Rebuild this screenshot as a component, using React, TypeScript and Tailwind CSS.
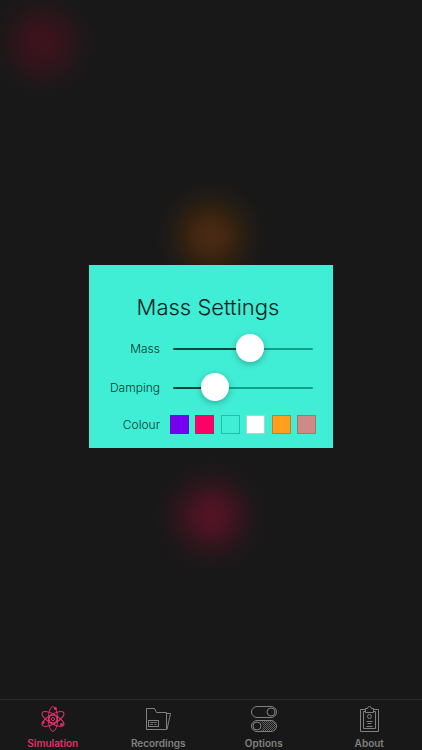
import { useState } from "react";
import type { ReactNode } from "react";

const ranges = [
  { id: "mass", label: "Mass", initial: 56 },
  { id: "damping", label: "Damping", initial: 25 },
];

const colours = [
  { name: "Purple", swatch: "bg-[#7800f0] border-[#5a18b8]" },
  { name: "Pink", swatch: "bg-[#ff0066] border-[#c41d5c]" },
  { name: "Turquoise", swatch: "bg-[#40edd5] border-[#1fbfa6]" },
  { name: "White", swatch: "bg-white border-[#a5d8cf]" },
  { name: "Orange", swatch: "bg-[#ff9f1c] border-[#b9812a]" },
  { name: "Rose", swatch: "bg-[#cf8a88] border-[#9c7a74]" },
];

function AtomIcon() {
  return (
    <svg width="28" height="28" viewBox="0 0 28 28" fill="none" stroke="currentColor" aria-hidden="true">
      <ellipse cx="14" cy="14" rx="4.6" ry="12.4" />
      <ellipse cx="14" cy="14" rx="4.6" ry="12.4" transform="rotate(60 14 14)" />
      <ellipse cx="14" cy="14" rx="4.6" ry="12.4" transform="rotate(-60 14 14)" />
      <circle cx="14" cy="14" r="4" />
      <circle cx="14" cy="14" r="1.6" />
      <g fill="currentColor" stroke="none">
        <circle cx="16.4" cy="3.6" r="1.5" />
        <circle cx="4.2" cy="17.6" r="1.4" />
        <circle cx="22.6" cy="19.4" r="1.5" />
      </g>
    </svg>
  );
}

function FolderIcon() {
  return (
    <svg width="28" height="28" viewBox="0 0 28 28" fill="none" stroke="currentColor" aria-hidden="true">
      <path d="M2.5 24.5v-21h8l2 4h10v17z" />
      <path d="M22.5 8.5h4l-3.500 16" />
      <rect x="4.5" y="15.5" width="10" height="6" />
      <path d="M6 17.500h7M6 19.500h3M10.500 19.500h2" strokeWidth="0.8" />
    </svg>
  );
}

function TogglesIcon() {
  return (
    <svg width="28" height="28" viewBox="0 0 28 28" fill="none" stroke="currentColor" aria-hidden="true">
      <defs>
        <pattern id="dots" width="2" height="2" patternUnits="userSpaceOnUse">
          <rect width="1" height="1" fill="currentColor" stroke="none" />
          <rect x="1" y="1" width="1" height="1" fill="currentColor" stroke="none" />
        </pattern>
      </defs>
      <rect x="1.5" y="1.5" width="25" height="11" rx="5.5" />
      <circle cx="21" cy="7" r="4" />
      <rect x="1.5" y="15.5" width="25" height="11" rx="5.5" />
      <path d="M10 16h11a5 5 0 0 1 0 10H10a6 6 0 0 0 0-10z" fill="url(#dots)" stroke="none" opacity="0.7" />
      <circle cx="7" cy="21" r="4" />
    </svg>
  );
}

function ClipboardIcon() {
  return (
    <svg width="28" height="28" viewBox="0 0 28 28" fill="none" stroke="currentColor" aria-hidden="true">
      <path d="M10 4.500H5.500v22h18v-22H19" />
      <path d="M10 6.500H8.500v17h12v-17H19" />
      <path d="M10.500 7.500v-4h2a2 2 0 0 1 4 0h2v4z" />
      <circle cx="14.5" cy="11.5" r="2" />
      <path d="M11.500 16.500h6M12.500 18.500h4M11.500 21.500h6" />
    </svg>
  );
}

const tabs: { label: string; icon: ReactNode }[] = [
  { label: "Simulation", icon: <AtomIcon /> },
  { label: "Recordings", icon: <FolderIcon /> },
  { label: "Options", icon: <TogglesIcon /> },
  { label: "About", icon: <ClipboardIcon /> },
];

function RangeRow({ id, label, initial }: { id: string; label: string; initial: number }) {
  const [value, setValue] = useState(initial);
  return (
    <div className="grid grid-cols-[60px_1fr] items-center gap-[10px]">
      <label htmlFor={id} className="text-right">
        {label}
      </label>
      <div className="flex px-[3px]">
        <input
          id={id}
          type="range"
          min={0}
          max={100}
          value={value}
          onChange={(e) => setValue(Number(e.target.value))}
          style={{ ["--fill" as string]: `${value}%` }}
          className="h-7 w-full cursor-pointer appearance-none bg-transparent [&::-webkit-slider-runnable-track]:h-[2px] [&::-webkit-slider-runnable-track]:rounded-full [&::-webkit-slider-runnable-track]:bg-[linear-gradient(to_right,#0c4639_var(--fill),#0fa08c_var(--fill))] [&::-webkit-slider-thumb]:-mt-[14px] [&::-webkit-slider-thumb]:size-7 [&::-webkit-slider-thumb]:appearance-none [&::-webkit-slider-thumb]:rounded-full [&::-webkit-slider-thumb]:bg-white [&::-webkit-slider-thumb]:shadow-[0_2px_6px_rgba(0,60,50,0.35)]"
        />
      </div>
    </div>
  );
}

export default function App() {
  const [active, setActive] = useState("Simulation");
  const [colour, setColour] = useState("Turquoise");

  return (
    <div className="flex min-h-screen flex-col bg-[#181818] font-['Inter','Liberation_Sans',sans-serif]">
      <main className="flex flex-1 items-center justify-center bg-[radial-gradient(circle_at_43px_43px,#3d131d_0,#38131c_14px,#2d151b_26px,#1f1719_40px,transparent_54px),radial-gradient(circle_at_50%_236px,#4b2a12_0,#432713_14px,#30200f_28px,#201b17_42px,transparent_56px),radial-gradient(circle_at_50%_516px,#541324_0,#471423_16px,#32151d_29px,#20171a_43px,transparent_58px)] pt-[14px]">
        <section
          aria-labelledby="settings-title"
          className="w-[244px] bg-[#40edd5] pt-7 pr-[17px] pb-[14px] pl-[11px] text-[12px] leading-4 font-light text-[#0a3b32]"
        >
          <h1 id="settings-title" className="text-center text-[22px] leading-7 text-[#06211c]">
            Mass Settings
          </h1>
          <div className="mt-[14px] flex flex-col gap-[11px]">
            {ranges.map((r) => (
              <RangeRow key={r.id} {...r} />
            ))}
          </div>
          <div className="mt-[13px] grid grid-cols-[60px_1fr] items-center gap-[10px]">
            <span id="colour-label" className="text-right">
              Colour
            </span>
            <div role="group" aria-labelledby="colour-label" className="flex justify-between">
              {colours.map((c) => (
                <button
                  key={c.name}
                  type="button"
                  aria-label={c.name}
                  aria-pressed={colour === c.name}
                  onClick={() => setColour(c.name)}
                  className={`size-[19px] border ${c.swatch}`}
                />
              ))}
            </div>
          </div>
        </section>
      </main>
      <nav className="grid grid-cols-4 border-t border-[#2a2a2a] bg-[#181818] pt-[5px]">
        {tabs.map((tab) => (
          <button
            key={tab.label}
            type="button"
            onClick={() => setActive(tab.label)}
            className={`flex flex-col items-center gap-[3px] text-[10px] leading-[14px] font-semibold ${
              active === tab.label ? "text-[#e0306b]" : "text-[#808080]"
            }`}
          >
            {tab.icon}
            {tab.label}
          </button>
        ))}
      </nav>
    </div>
  );
}
